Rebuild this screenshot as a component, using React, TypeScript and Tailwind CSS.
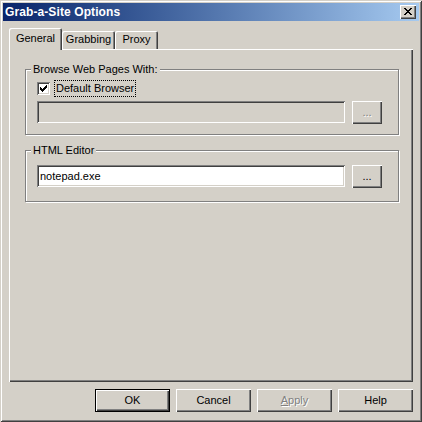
import React from "react";

const raised =
  "shadow-[inset_1px_1px_0_#ffffff,inset_-1px_-1px_0_#404040,inset_-2px_-2px_0_#808080]";
const sunken =
  "shadow-[inset_1px_1px_0_#808080,inset_-1px_-1px_0_#ffffff,inset_2px_2px_0_#404040,inset_-2px_-2px_0_#d4d0c8]";

function CheckMark() {
  return (
    <svg width="7" height="7" viewBox="0 0 7 7" shapeRendering="crispEdges">
      <path
        d="M0 2h1v3H0z M1 3h1v3H1z M2 4h1v3H2z M3 3h1v3H3z M4 2h1v3H4z M5 1h1v3H5z M6 0h1v3H6z"
        fill="#000"
      />
    </svg>
  );
}

function CloseGlyph() {
  return (
    <svg width="8" height="7" viewBox="0 0 8 7" shapeRendering="crispEdges">
      <path
        d="M0 0h2v1H0z M6 0h2v1H6z M1 1h2v1H1z M5 1h2v1H5z M2 2h4v1H2z M3 3h2v1H3z M2 4h4v1H2z M1 5h2v1H1z M5 5h2v1H5z M0 6h2v1H0z M6 6h2v1H6z"
        fill="#000"
      />
    </svg>
  );
}

function GroupBox({
  label,
  className,
  children,
}: {
  label: string;
  className: string;
  children: React.ReactNode;
}) {
  return (
    <div
      className={`relative w-[374px] border border-[#808080] shadow-[1px_1px_0_#ffffff,inset_1px_1px_0_#ffffff] ${className}`}
    >
      <div className="absolute -top-[8px] left-[5px] bg-[#d4d0c8] px-[2px] text-[11px] leading-[14px] text-black">
        {label}
      </div>
      {children}
    </div>
  );
}

function DotsButton({ disabled }: { disabled?: boolean }) {
  return (
    <div
      className={`w-[30px] h-[23px] bg-[#d4d0c8] ${raised} flex items-center justify-center text-[11px] leading-none pb-[1px] ${
        disabled
          ? "text-[#808080] [text-shadow:1px_1px_0_#ffffff]"
          : "text-black"
      }`}
    >
      ...
    </div>
  );
}

function DlgButton({
  children,
  isDefault,
  disabled,
}: {
  children: React.ReactNode;
  isDefault?: boolean;
  disabled?: boolean;
}) {
  return (
    <div
      className={`w-[75px] h-[23px] bg-[#d4d0c8] flex items-center justify-center text-[11px] leading-none ${
        isDefault
          ? "border border-black shadow-[inset_1px_1px_0_#ffffff,inset_-1px_-1px_0_#404040,inset_-2px_-2px_0_#808080]"
          : raised
      } ${
        disabled
          ? "text-[#808080] [text-shadow:1px_1px_0_#ffffff]"
          : "text-black"
      }`}
    >
      {children}
    </div>
  );
}

export default function App() {
  return (
    <div className="w-[422px] h-[422px] bg-[#d4d0c8] p-[3px] flex flex-col font-[family-name:'Liberation_Sans',Arial,sans-serif] shadow-[inset_1px_1px_0_#d4d0c8,inset_-1px_-1px_0_#404040,inset_2px_2px_0_#ffffff,inset_-2px_-2px_0_#808080] select-none">
      {/* Title bar */}
      <div className="h-[18px] bg-linear-to-r from-[#0a246a] to-[#a6caf0] flex items-center justify-between pl-[2px] pr-[3px]">
        <span className="text-white font-bold text-[12px] leading-none tracking-[0.1px]">
          Grab-a-Site Options
        </span>
        <div
          className={`w-[16px] h-[14px] bg-[#d4d0c8] ${raised} flex items-center justify-center pb-[1px]`}
        >
          <CloseGlyph />
        </div>
      </div>

      {/* Body */}
      <div className="flex-1 flex flex-col px-[6px] pt-[7px]">
        {/* Tabs */}
        <div className="h-[21px] flex items-start">
          <div className="relative z-10 w-[53px] h-[22px] bg-[#d4d0c8] rounded-t-[2px] shadow-[inset_1px_1px_0_#ffffff,inset_-1px_0_0_#404040,inset_-2px_0_0_#808080] flex items-center justify-center pb-[2px] text-[11px] leading-none text-black">
            General
          </div>
          <div className="mt-[3px] w-[53px] h-[18px] bg-[#d4d0c8] rounded-t-[2px] shadow-[inset_1px_1px_0_#ffffff,inset_-1px_0_0_#404040,inset_-2px_0_0_#808080] flex items-center justify-center pb-[1px] text-[11px] leading-none text-black">
            Grabbing
          </div>
          <div className="mt-[3px] w-[43px] h-[18px] bg-[#d4d0c8] rounded-t-[2px] shadow-[inset_1px_1px_0_#ffffff,inset_-1px_0_0_#404040,inset_-2px_0_0_#808080] flex items-center justify-center pb-[1px] text-[11px] leading-none text-black">
            Proxy
          </div>
        </div>

        {/* Panel */}
        <div
          className={`h-[333px] w-[404px] bg-[#d4d0c8] ${raised} pt-[20px] pl-[16px] flex flex-col`}
        >
          <GroupBox label="Browse Web Pages With:" className="h-[66px] pt-[10px] pl-[11px]">
            <div className="h-[17px] flex items-center">
              <div
                className={`w-[13px] h-[13px] bg-white ${sunken} flex items-center justify-center`}
              >
                <CheckMark />
              </div>
              <div className="ml-[4px] h-[17px] px-[1px] border border-dotted border-black flex items-center text-[11px] leading-none text-black">
                Default Browser
              </div>
            </div>
            <div className="mt-[4px] flex items-start gap-[7px]">
              <div className={`w-[308px] h-[22px] bg-[#d4d0c8] ${sunken}`} />
              <DotsButton disabled />
            </div>
          </GroupBox>

          <GroupBox label="HTML Editor" className="mt-[15px] h-[52px] pt-[14px] pl-[11px]">
            <div className="flex items-start gap-[7px]">
              <div
                className={`w-[308px] h-[22px] bg-white ${sunken} flex items-center pl-[3px] text-[11px] leading-none text-black`}
              >
                notepad.exe
              </div>
              <DotsButton />
            </div>
          </GroupBox>
        </div>

        {/* Buttons */}
        <div className="mt-[7px] flex justify-end gap-[6px]">
          <DlgButton isDefault>OK</DlgButton>
          <DlgButton>Cancel</DlgButton>
          <DlgButton disabled>
            <span>
              <span className="underline">A</span>pply
            </span>
          </DlgButton>
          <DlgButton>Help</DlgButton>
        </div>
      </div>
    </div>
  );
}
